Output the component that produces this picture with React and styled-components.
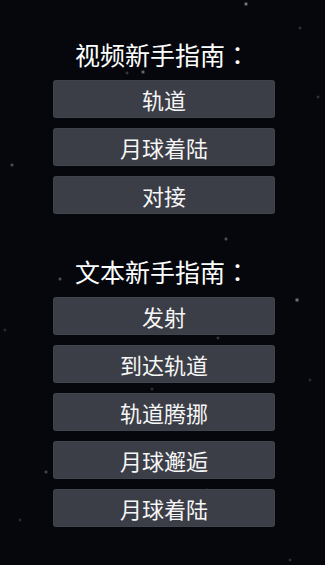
import React from "react";
import styled, { createGlobalStyle } from "styled-components";

const stars = [
  [246, 4, 1.2, 0.7], [143, 72, 1.2, 0.6], [127, 73, 0.8, 0.4], [12, 165, 1, 0.5],
  [300, 28, 0.8, 0.35], [262, 180, 0.8, 0.4], [226, 239, 1, 0.5], [297, 300, 1.4, 0.6],
  [60, 279, 1, 0.5], [195, 325, 1.2, 0.5], [218, 338, 0.8, 0.4], [72, 362, 1, 0.5],
  [108, 360, 1.2, 0.5], [165, 380, 1, 0.45], [152, 389, 0.8, 0.35], [55, 425, 1, 0.45],
  [46, 472, 1, 0.45], [90, 424, 1, 0.45], [143, 474, 1, 0.4], [207, 490, 0.8, 0.35],
  [118, 508, 1, 0.4], [270, 420, 0.8, 0.35], [318, 97, 0.8, 0.35], [257, 138, 0.8, 0.35],
  [126, 142, 0.8, 0.35], [254, 203, 1, 0.45], [290, 560, 0.8, 0.35], [20, 520, 0.8, 0.3],
  [310, 380, 0.8, 0.3], [5, 330, 0.8, 0.3],
];

const starBg = stars
  .map(
    ([x, y, r, a]) =>
      `radial-gradient(circle at ${x}px ${y}px, rgba(255,255,255,${a}) 0, rgba(255,255,255,${a * 0.4}) ${r}px, rgba(255,255,255,0) ${r + 1.2}px)`
  )
  .join(",");

const GlobalStyle = createGlobalStyle`
  html, body {
    margin: 0;
    padding: 0;
    background: #05070d;
  }
  body {
    font-family: "Noto Sans CJK SC", "Noto Sans", sans-serif;
    color: #ffffff;
  }
`;

const Page = styled.div`
  width: 325px;
  height: 565px;
  box-sizing: border-box;
  padding-top: 34px;
  display: flex;
  flex-direction: column;
  align-items: center;
  gap: 37px;
  background-color: #05070d;
`;

const Section = styled.section`
  display: flex;
  flex-direction: column;
  align-items: center;
  gap: 10px;
`;

const Title = styled.h2`
  margin: 0 0 -4px 0;
  height: 40px;
  line-height: 40px;
  font-size: 25px;
  font-weight: 400;
  color: #ffffff;
  letter-spacing: 0;
`;

const Colon = styled.span`
  font-family: "Noto Sans CJK TC", "Noto Sans CJK SC", sans-serif;
`;

const GuideButton = styled.button`
  width: 222px;
  height: 38px;
  margin-left: 3px;
  padding: 0;
  border: none;
  border-radius: 3px;
  background: #3b3e46;
  color: #f6f6f6;
  font-family: "Noto Sans CJK SC", "Noto Sans", sans-serif;
  font-size: 22px;
  line-height: 38px;
  cursor: pointer;
  box-shadow: inset 0 0 0 1px rgba(255, 255, 255, 0.03);
`;

const sections = [
  { title: "视频新手指南", items: ["轨道", "月球着陆", "对接"] },
  { title: "文本新手指南", items: ["发射", "到达轨道", "轨道腾挪", "月球邂逅", "月球着陆"] },
];

export default function App() {
  return (
    <>
      <GlobalStyle />
      <Page style={{ backgroundImage: starBg }}>
        {sections.map((s) => (
          <Section key={s.title}>
            <Title>
              {s.title}
              <Colon>：</Colon>
            </Title>
            {s.items.map((it, i) => (
              <GuideButton key={i}>{it}</GuideButton>
            ))}
          </Section>
        ))}
      </Page>
    </>
  );
}
